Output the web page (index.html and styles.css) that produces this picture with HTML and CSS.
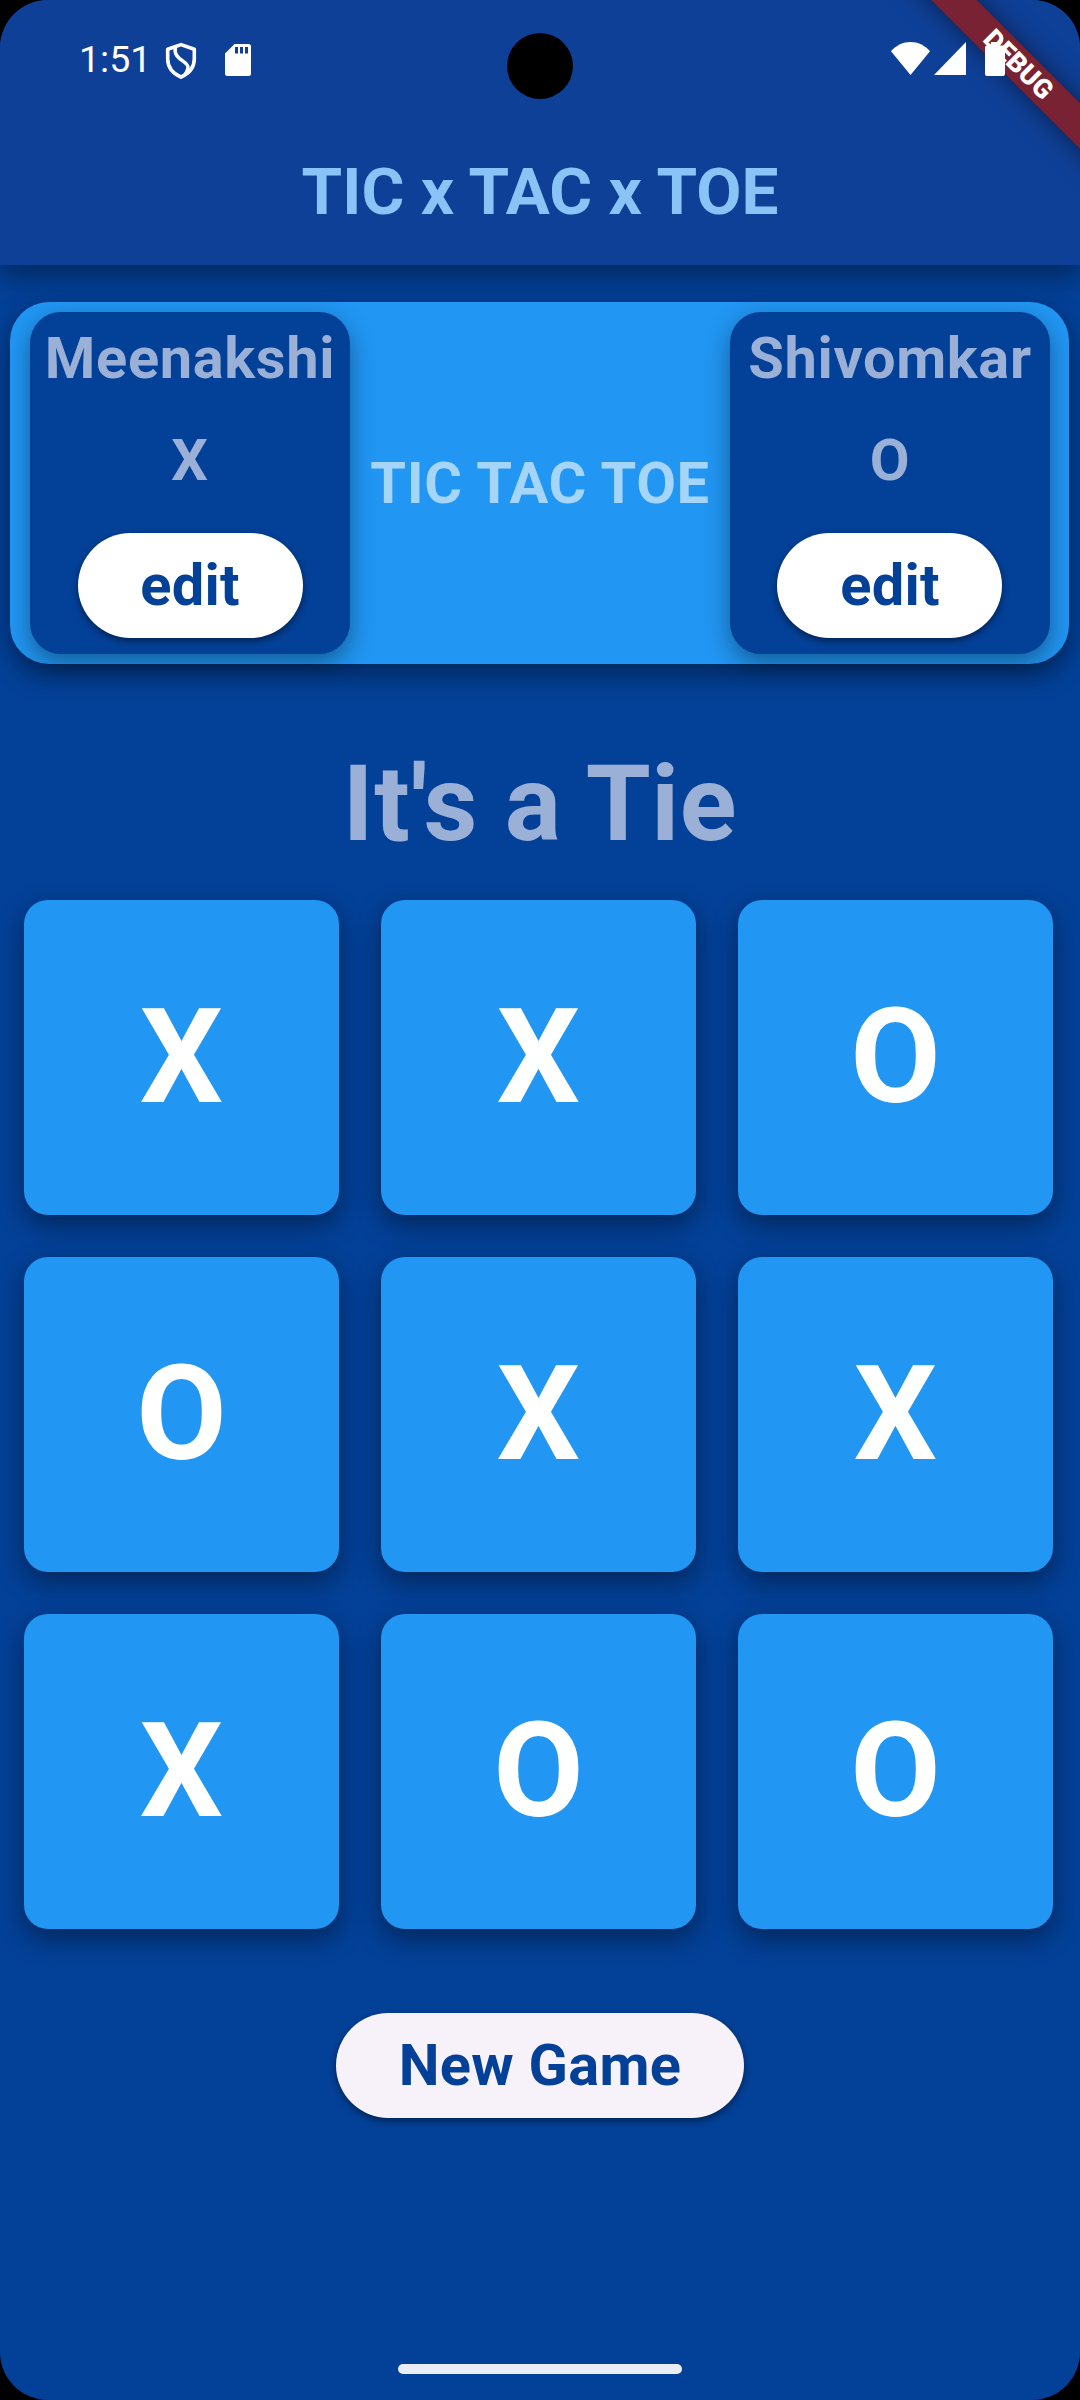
FILE: index.html
```html
<!DOCTYPE html>
<html lang="en">
<head>
<meta charset="utf-8">
<title>TIC x TAC x TOE</title>
<link rel="stylesheet" href="styles.css">
</head>
<body>
<div class="screen">
  <header class="app-bar">
    <div class="status-bar">
      <span class="clock">1:51</span>
      <svg class="shield" width="32" height="38" viewBox="0 0 32 38" fill="none" stroke="#fff" stroke-width="3.6" stroke-linejoin="round">
        <path d="M16 2.6 29.3 7.2V17C29.3 25.5 24 31.5 16 35.2 8 31.5 2.700 25.500 2.700 17V7.200Z"/>
        <path d="M10.500 5C9 10 10.500 13 14.500 16.500 18.500 20 23.500 21.500 23 26 22.500 29 21.500 30.500 20 32.500"/>
      </svg>
      <svg class="sd" width="26" height="32" viewBox="0 0 26 32">
        <path fill="#fff" fill-rule="evenodd" d="M9.500 0H23.500A2.500 2.500 0 0 1 26 2.500V29.500A2.500 2.500 0 0 1 23.500 32H2.500A2.500 2.500 0 0 1 0 29.500V9.500ZM10 3V9.500H13V3ZM15 3V9.500H18V3ZM20 3V9.500H23V3Z"/>
      </svg>
      <span class="grow"></span>
      <svg class="wifi" width="39" height="33" viewBox="0 0 39 33"><path fill="#fff" d="M0 9.300C10.500-3.100 28.500-3.100 39 9.300L19.500 33Z"/></svg>
      <svg class="signal" width="32" height="33" viewBox="0 0 32 33"><path fill="#fff" d="M0 33 32 0V33Z"/></svg>
      <svg class="battery" width="20" height="34" viewBox="0 0 20 34"><path fill="#fff" d="M6 0H14V3.500H18Q20 3.500 20 5.500V32Q20 34 18 34H2Q0 34 0 32V5.500Q0 3.500 2 3.500H6Z"/></svg>
    </div>
    <h1 class="title">TIC x TAC x TOE</h1>
  </header>

  <main class="content">
    <section class="scoreboard">
      <div class="player">
        <span class="name">Meenakshi</span>
        <span class="mark">X</span>
        <button class="pill edit">edit</button>
      </div>
      <span class="versus">TIC TAC TOE</span>
      <div class="player">
        <span class="name">Shivomkar</span>
        <span class="mark">O</span>
        <button class="pill edit">edit</button>
      </div>
    </section>

    <p class="result">It's a Tie</p>

    <section class="board">
      <div class="cell">X</div><div class="cell">X</div><div class="cell">O</div>
      <div class="cell">O</div><div class="cell">X</div><div class="cell">X</div>
      <div class="cell">X</div><div class="cell">O</div><div class="cell">O</div>
    </section>

    <button class="pill new-game">New Game</button>
  </main>

  <div class="home-bar"></div>
  <div class="camera"></div>
  <div class="banner">DEBUG</div>
</div>
</body>
</html>
```
FILE: styles.css
```css
* { box-sizing: border-box; }

body {
  margin: 0;
  background: #000;
  font-family: Roboto, sans-serif;
}

.screen {
  position: relative;
  display: flex;
  flex-direction: column;
  width: 1080px;
  height: 2400px;
  overflow: hidden;
  border-radius: 48px;
  background: #034097;
}

.app-bar {
  height: 265px;
  background: #0f4098;
  box-shadow: 0 10px 26px rgba(0, 0, 0, .4);
}

.status-bar {
  display: flex;
  align-items: flex-start;
  height: 118px;
  padding: 42px 75px 0 79px;
  color: #fff;
}

.status-bar svg { position: relative; z-index: 2; }

.clock {
  width: 86px;
  margin-top: -5px;
  font-size: 37.500px;
  line-height: 44px;
}

.sd { margin: 2px 0 0 28px; }
.grow { flex: 1; }
.signal { margin: 0 19px 0 4px; }

.title {
  margin: 0;
  color: #8ac3f5;
  font-size: 65.600px;
  font-weight: 700;
  line-height: 147px;
  text-align: center;
}

.content {
  display: flex;
  flex-direction: column;
  align-items: center;
  padding-top: 37px;
}

.scoreboard {
  display: flex;
  justify-content: space-between;
  align-items: center;
  width: 1059px;
  height: 362px;
  margin-right: 1px;
  padding: 10px 19px 10px 20px;
  border-radius: 39px;
  background: #2196f3;
  box-shadow: 0 10px 26px rgba(0, 0, 0, .4);
}

.player {
  display: flex;
  flex-direction: column;
  align-items: center;
  width: 320px;
  height: 342px;
  padding-top: 12px;
  border-radius: 31px;
  background: #034097;
  box-shadow: 0 9px 24px rgba(0, 0, 0, .38);
}

.name, .mark, .versus {
  font-size: 57.750px;
  font-weight: 700;
  line-height: 68px;
  letter-spacing: .656px;
}

.name, .mark { color: #9bb0d6; }
.mark { margin: 34px 0 39px; }
.versus { color: #a6d5fa; }

.pill {
  height: 105px;
  padding: 0 0 2px;
  border: 0;
  border-radius: 53px;
  color: #034097;
  font-family: inherit;
  font-size: 57.750px;
  font-weight: 700;
  letter-spacing: .26px;
  box-shadow: 0 3px 7px rgba(0, 0, 0, .45);
}

.edit {
  width: 225px;
  background: #fff;
}

.result {
  margin: 79px 0 34px;
  color: #9bb0d6;
  font-size: 105px;
  font-weight: 700;
  line-height: 123px;
  letter-spacing: .656px;
}

.board {
  display: grid;
  grid-template-columns: repeat(3, 315px);
  grid-auto-rows: 315px;
  gap: 42px;
  margin-right: 3px;
}

.cell {
  display: flex;
  align-items: center;
  justify-content: center;
  padding-bottom: 2px;
  border-radius: 24px;
  background: #2196f3;
  color: #fff;
  font-size: 131.250px;
  font-weight: 700;
  box-shadow: 0 10px 26px rgba(0, 0, 0, .4);
}

.new-game {
  width: 408px;
  margin-top: 84px;
  background: #f7f2fa;
}

.home-bar {
  width: 284px;
  height: 10px;
  margin: auto auto 26px;
  border-radius: 5px;
  background: #e9eef6;
}

.camera {
  position: absolute;
  top: 33px;
  left: 507px;
  width: 66px;
  height: 66px;
  border-radius: 50%;
  background: #000;
}

.banner {
  position: absolute;
  top: 47px;
  left: 817px;
  z-index: 1;
  width: 400px;
  height: 32px;
  padding-left: 4px;
  transform: rotate(45deg);
  background: #782233;
  color: #fff;
  font-size: 26.800px;
  font-weight: 900;
  line-height: 32px;
  text-align: center;
  box-shadow: 0 0 26px rgba(0, 0, 0, .5);
}
```
